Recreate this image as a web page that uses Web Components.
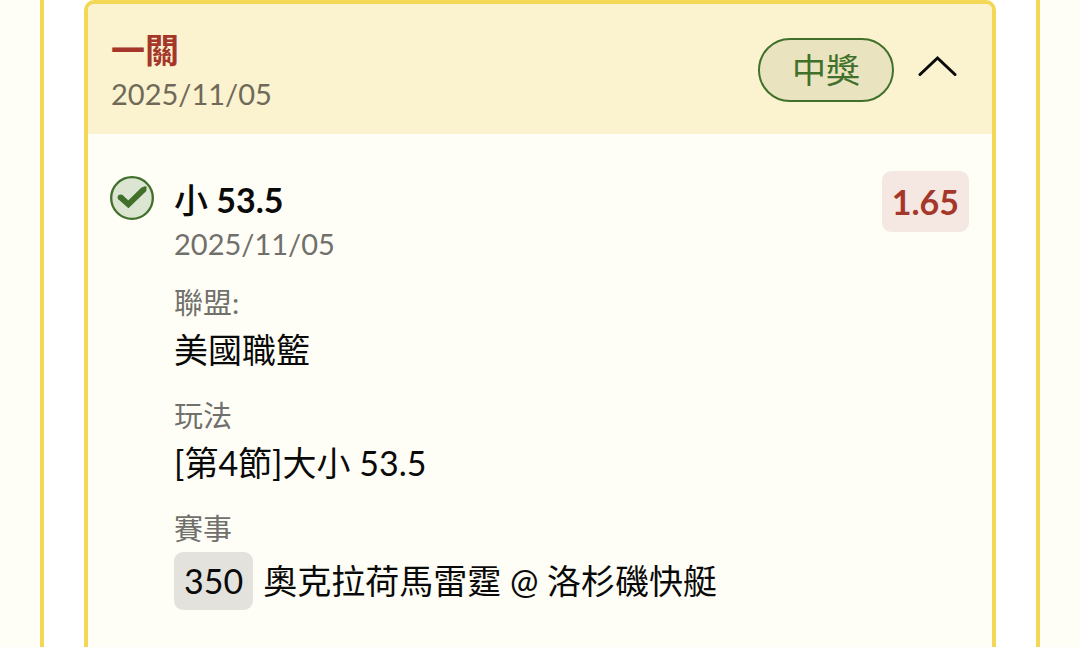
<!DOCTYPE html>
<html lang="zh-Hant">
<head>
<meta charset="utf-8">
<meta name="viewport" content="width=device-width, initial-scale=1">
<title>投注紀錄</title>
<style>
html { background: #fffef6; }
body {
  margin: 0;
  font-family: Lato, "Noto Sans CJK TC", sans-serif;
  font-size: 34px;
  line-height: 44px;
  color: #0a0a0a;
  --line: #f3d858;
  --paper: #fffef6;
  --green: #41702b;
  --red: #a4372a;
  --muted: #70706c;
}
.han { font-weight: 500; }
</style>
</head>
<body>
<bet-panel>
  <bet-card>
    <bet-header slot="header" status="中獎">
      <span slot="title">一關</span>
      <time slot="date" datetime="2025-11-05">2025/11/05</time>
    </bet-header>
    <bet-leg>
      <check-mark slot="icon"></check-mark>
      <span slot="pick"><span class="han">小</span> 53.5</span>
      <time slot="date" datetime="2025-11-05">2025/11/05</time>
      <odds-tag slot="odds">1.65</odds-tag>
      <leg-field label="聯盟:">美國職籃</leg-field>
      <leg-field label="玩法">[第4節]大小 53.5</leg-field>
      <leg-field label="賽事"><game-number slot="number">350</game-number>奧克拉荷馬雷霆 @ 洛杉磯快艇</leg-field>
    </bet-leg>
  </bet-card>
</bet-panel>
<script>
const define = (name, html, setup) => customElements.define(name, class extends HTMLElement {
  constructor() {
    super();
    const template = document.createElement('template');
    template.innerHTML = html;
    this.attachShadow({ mode: 'open' }).append(template.content.cloneNode(true));
    if (setup) setup(this, this.shadowRoot);
  }
});

define('bet-panel', `<style>
  :host { display: flex; flex-direction: column; box-sizing: border-box; min-height: 100vh;
    margin: 0 40px; padding: 0 40px; background: #fff;
    border: solid var(--line); border-width: 0 4px; }
  ::slotted(*) { flex: 1; }
</style><slot></slot>`);

define('bet-card', `<style>
  :host { display: block; background: var(--paper); overflow: hidden;
    border: 4px solid var(--line); border-bottom: 0; border-radius: 10px 10px 0 0; }
</style><slot name="header"></slot><slot></slot>`);

define('bet-header', `<style>
  :host { display: flex; align-items: flex-start; padding: 24px 22px 18px 23px; background: #fbf2cf; }
  .text { flex: 1; display: flex; flex-direction: column; }
  .title { font-weight: 700; color: var(--red); }
  .date { font-size: 29px; color: #6f6a58; }
  .controls { display: flex; gap: 12px; padding-top: 10px; }
  .status { box-sizing: border-box; height: 64px; padding: 0 32px; line-height: 60px;
    border: 2px solid var(--green); border-radius: 32px; background: #e9e4bf; color: var(--green); }
  button { display: grid; place-items: center; width: 64px; height: 64px; padding: 0; border: 0; background: none; color: inherit; }
  svg { display: block; }
</style>
<div class="text"><slot class="title" name="title"></slot><slot class="date" name="date"></slot></div>
<div class="controls">
  <span class="status"></span>
  <button type="button" aria-label="收合" aria-expanded="true">
    <svg width="40" height="32" viewBox="0 0 40 32" fill="none" stroke="currentColor" stroke-width="3" stroke-linecap="round" stroke-linejoin="miter"><path d="M2 20.500 19.500 4 37 20.500"/></svg>
  </button>
</div>`, (el, root) => {
  root.querySelector('.status').textContent = el.getAttribute('status');
  const button = root.querySelector('button');
  button.addEventListener('click', () => {
    const open = button.getAttribute('aria-expanded') === 'true';
    button.setAttribute('aria-expanded', String(!open));
  });
});

define('bet-leg', `<style>
  :host { display: flex; align-items: flex-start; gap: 20px; padding: 36px 22px; }
  .icon { display: block; padding-top: 6px; }
  .main { flex: 1; display: flex; flex-direction: column; padding-top: 8px; }
  .pick { display: block; font-weight: 700; }
  .date { display: block; font-size: 29px; color: var(--muted); }
  .fields { display: flex; flex-direction: column; gap: 19px; padding-top: 18px; }
</style>
<div class="icon"><slot name="icon"></slot></div>
<div class="main">
  <slot class="pick" name="pick"></slot>
  <slot class="date" name="date"></slot>
  <div class="fields"><slot></slot></div>
</div>
<slot name="odds"></slot>`);

define('check-mark', `<style>:host { display: block; } svg { display: block; }</style>
<svg width="44" height="44" viewBox="0 0 45 45" fill="none" stroke="#41702b" role="img" aria-label="命中">
  <circle cx="22.500" cy="22.500" r="21.300" fill="#dbe5d2" stroke-width="2.400"/>
  <path d="M10.500 21.500 18.800 29 34.800 13.500" stroke-width="6"/>
  <circle cx="10.800" cy="21.800" r="3" fill="#41702b" stroke="none"/>
  <path d="M33 11.500 35.500 10.500 37.500 11 37.200 15 35 17Z" fill="#41702b" stroke="none"/>
</svg>`);

define('odds-tag', `<style>
  :host { display: block; padding: 0 10px; margin: 1px 1px 0 0; border-radius: 9px; background: #f5e8e2;
    color: var(--red); font-weight: 700; line-height: 61px; }
</style><slot></slot>`);

define('leg-field', `<style>
  :host { display: block; }
  dl { margin: 0; }
  dt { font-size: 29px; line-height: 38px; color: var(--muted); }
  dd { display: flex; align-items: center; gap: 10px; margin: 0; line-height: 56px; }
  dd.numbered { padding-top: 4px; }
</style>
<dl><dt></dt><dd><slot name="number"></slot><span><slot></slot></span></dd></dl>`, (el, root) => {
  root.querySelector('dt').textContent = el.getAttribute('label');
  root.querySelector('dd').classList.toggle('numbered', !!el.querySelector('[slot=number]'));
});

define('game-number', `<style>
  :host { display: block; padding: 0 10px; border-radius: 9px; background: #e3e2dc; line-height: 58px; }
</style><slot></slot>`);
</script>
</body>
</html>
